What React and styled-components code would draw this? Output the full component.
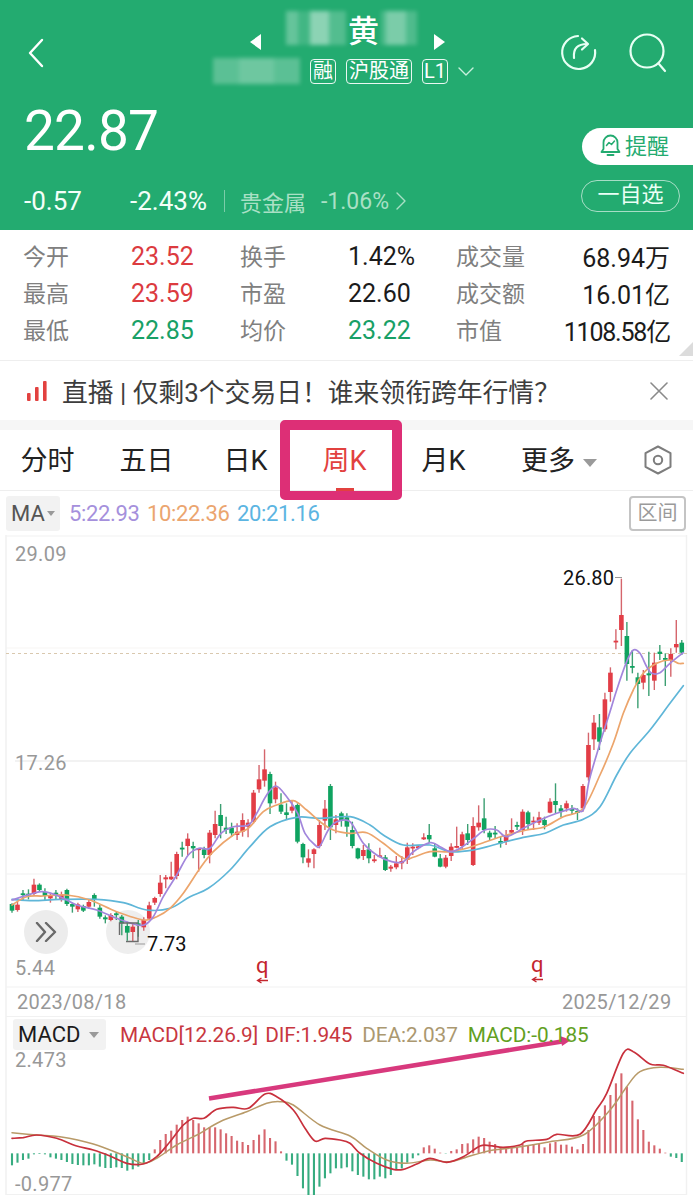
import React from "react";
import styled, { createGlobalStyle } from "styled-components";

const Global = createGlobalStyle`
  html, body { margin: 0; padding: 0; background: #fff; }
  * { box-sizing: border-box; }
`;
const FONT = `Roboto, "Noto Sans CJK SC", sans-serif`;
const GREEN = "#23ab70";
const RED = "#dc3b3f";
const UP = "#e23d46";
const DOWN = "#0fa360";

const Page = styled.div`
  width: 693px; height: 1200px; overflow: hidden; background: #fff;
  font-family: ${FONT}; position: relative;
`;
const Header = styled.header`
  height: 230px; background: ${GREEN}; color: #fff; display: flex; flex-direction: column;
`;
const TopGrid = styled.div`
  height: 100px; display: grid; grid-template-columns: 213px 262px 1fr; 
`;
const BackCell = styled.div`
  padding: 38px 0 0 27px;
`;
const CenterCell = styled.div`
  display: flex; flex-direction: column; padding-top: 11px;
`;
const NameRow = styled.div`
  display: flex; align-items: flex-start; height: 46px; padding-left: 36px; 
`;
const Tri = styled.svg`
  width: 13px; height: 18px; margin-top: 22px; flex: none;
`;
const Mosaic = styled.span`
  display: block; flex: none; width: ${p => p.$w}px; height: ${p => p.$h}px; filter: blur(2px);
  background: linear-gradient(90deg, ${p => p.$stops});
`;
const NameChar = styled.span`
  font-size: 31px; line-height: 42px; width: 35px; text-align: center; font-weight: 500; flex: none;
`;
const TagRow = styled.div`
  display: flex; align-items: center; gap: 10px; height: 32px; margin-top: -2px;
`;
const Tag = styled.span`
  height: 25px; width: ${p => p.$w}px; border: 1px solid rgba(255,255,255,.9); border-radius: 4px;
  font-size: 20px; line-height: 22px; text-align: center; flex: none; white-space: nowrap;
`;
const Actions = styled.div`
  display: flex; justify-content: flex-end; gap: 31px; padding: 33px 24px 0 0; align-items: flex-start;
`;
const PriceBlock = styled.div`
  display: flex; justify-content: space-between; flex: 1;
`;
const PriceLeft = styled.div`
  padding-left: 24px; display: flex; flex-direction: column;
`;
const Price = styled.div`
  font-size: 55px; line-height: 62px; height: 86px; font-weight: 400; letter-spacing: -.8px;
`;
const ChangeRow = styled.div`
  display: flex; align-items: center; height: 30px; font-size: 26px;
`;
const Change = styled.span`
  width: ${p => p.$w}px; flex: none; color: #f3fff9;
`;
const Divider = styled.i`
  width: 1px; height: 22px; background: rgba(255,255,255,.4); margin: 0 15px 0 16px;
`;
const Sector = styled.span`
  color: #a9e0c5; font-size: 22px; margin-right: 15px;
`;
const SectorPct = styled.span`
  color: #a9e0c5; font-size: 23px; margin-right: 7px;
`;
const BtnCol = styled.div`
  display: flex; flex-direction: column; align-items: flex-end; padding-top: 28px;
`;
const RemindBtn = styled.div`
  width: 111px; height: 37px; background: #fff; border-radius: 19px 0 0 19px; color: ${GREEN};
  display: flex; align-items: center; gap: 4px; padding: 0 0 5px 18px; font-size: 22px;
`;
const WatchBtn = styled.div`
  width: 99px; height: 32px; margin: 15px 13px 0 0; border: 1px solid rgba(255,255,255,.6); border-radius: 16px;
  font-size: 22px; line-height: 28px; text-align: center; color: #eafff5;
`;

const Stats = styled.section`
  height: 131px; padding: 8px 23px 0 23px; display: grid; position: relative;
  grid-template-columns: 108px 109px 108px 108px auto 1fr; grid-auto-rows: 37px; align-items: center;
  border-bottom: 1px solid #eeeeee;
`;
const Label = styled.span`
  color: #808080; font-size: 23px; white-space: nowrap; margin-top: -4px;
`;
const Value = styled.span`
  font-size: 25px; color: ${p => p.$c || "#1b1b1b"}; white-space: nowrap;
  text-align: ${p => (p.$right ? "right" : "left")};
  letter-spacing: ${p => (p.$tight ? "-1.2px" : "0")};
  margin-top: -1px;
`;
const Corner = styled.i`
  position: absolute; right: 0; bottom: 4px; width: 0; height: 0;
  border-left: 14px solid transparent; border-bottom: 14px solid #dcdcdc;
`;
const Notice = styled.div`
  height: 59px; display: flex; align-items: center; padding-left: 27px; color: #3d3d3d;
`;
const NoticeText = styled.span`
  font-size: 25.8px; margin-left: 15px; flex: 1; white-space: nowrap;
`;
const Band = styled.div`
  height: 10px; background: #f6f6f6;
`;
const Tabs = styled.nav`
  height: 61px; position: relative; display: grid; grid-template-columns: repeat(6, 99px) 1fr;
  align-items: center; border-bottom: 1px solid #eeeeee; color: #222;
`;
const Tab = styled.div`
  text-align: center; font-size: 27px; line-height: 40px; white-space: nowrap; margin-top: 2px;
  padding-right: 4px; color: ${p => (p.$on ? "#e2413f" : "#222")};
`;
const MoreTab = styled(Tab)`
  text-align: left; padding: 0 0 0 26px;
`;
const IconCell = styled.div`
  padding-left: 50px; line-height: 0;
`;
const CloseCell = styled.div`
  padding-right: 25px; line-height: 0;
`;
const Caret = styled.i`
  display: inline-block; width: 0; height: 0; margin-left: ${p => p.$ml || 8}px; vertical-align: ${p => p.$va || 3}px;
  border-left: ${p => p.$s || 7}px solid transparent; border-right: ${p => p.$s || 7}px solid transparent;
  border-top: ${p => (p.$s || 7) + 1}px solid #9a9a9a;
`;
const HighlightBox = styled.div`
  position: absolute; left: 280px; top: -10px; width: 122px; height: 80px;
  border: solid #dd2f76; border-width: 10px 10px 9px; border-radius: 5px;
`;
const Underline = styled.i`
  position: absolute; left: 336px; top: 58px; width: 18px; height: 3px; background: #e2413f;
`;
const MaBar = styled.div`
  height: 44px; display: flex; align-items: center; padding: 0 7px 0 6px; font-size: 22px;
`;
const SelectBox = styled.div`
  width: ${p => p.$w}px; height: ${p => p.$h}px; background: #f2f2f2; border-radius: 3px; color: ${p => p.$c};
  display: flex; align-items: center; padding-left: ${p => p.$pl}px; font-size: 22px; flex: none;
`;
const MaValue = styled.span`
  color: ${p => p.$c}; margin-right: 7.5px; letter-spacing: -.35px; white-space: nowrap;
`;
const MaList = styled.div`
  flex: 1; display: flex; padding-left: 9px;
`;
const RangeBtn = styled.div`
  width: 57px; height: 35px; border: 2px solid #c4c4c4; border-radius: 4px; color: #9a9a9a;
  font-size: 20px; line-height: 31px; text-align: center;
`;
const ChartWrap = styled.div`
  position: relative; height: 665px;
`;
const ChartSvg = styled.svg`
  display: block; width: 693px; height: 665px; font-family: ${FONT};
`;
const Expand = styled.div`
  position: absolute; left: 24px; top: 375px; width: 44px; height: 44px; border-radius: 50%; background: #ececec;
  display: flex; align-items: center; justify-content: center;
`;
const MacdBar = styled.div`
  position: absolute; left: 13px; top: 484px; height: 31px; display: flex; align-items: center; white-space: nowrap;
`;
const MacdGap = styled.i`
  width: 14px; flex: none;
`;
const MacdText = styled.span`
  color: ${p => p.$c}; font-size: 20.8px; margin-right: ${p => p.$mr}px; letter-spacing: -.1px;
`;

// ---------- data (coordinates read from the reference at 3x) ----------
const C = [[0,372,392,370,398],[1,374,390,364,395],[0,340,345,330,360],[0,341,345,328,358],[1,314,342,296,345],[0,314,330,310,335],[0,336,348,325,360],[1,348,355,340,368],[0,338,348,330,360],[1,345,358,335,365],[0,330,372,326,378],[0,372,380,368,398],[1,373,388,368,396],[0,378,392,374,396],[1,366,380,360,386],[0,345,360,340,380],[0,383,410,375,416],[0,412,418,406,430],[1,405,420,400,424],[0,400,404,395,420],[0,410,430,405,466],[0,438,458,425,482],[1,440,456,430,485],[0,430,436,420,470],[1,420,442,412,452],[1,376,416,365,420],[1,354,368,350,375],[1,308,342,285,350],[1,292,298,285,325],[1,290,298,245,300],[1,222,288,215,298],[0,203,207,185,230],[1,176,198,160,225],[0,198,205,185,235],[1,205,210,205,275],[0,208,225,200,235],[1,158,225,150,250],[1,132,165,92,175],[0,105,138,72,175],[0,143,150,110,162],[0,143,160,128,170],[1,155,165,130,180],[1,120,155,100,170],[1,128,140,118,172],[1,38,125,30,130],[1,-2,28,-45,38],[1,-32,2,-92,20],[0,-18,70,-25,102],[1,22,58,5,70],[0,74,95,40,102],[0,97,105,70,120],[1,80,92,60,100],[0,75,185,70,190],[0,192,232,188,250],[1,235,248,208,262],[1,208,222,205,265],[1,135,198,120,205],[1,86,122,60,150],[0,18,142,12,180],[1,118,135,105,160],[0,100,120,95,140],[0,112,140,100,170],
[0,150,198,125,205],[0,205,235,203,238],[1,210,228,195,240],[0,208,235,190,250],[1,238,243,225,248],[1,226,230,203,232],[0,232,270,225,273],[1,260,266,255,275],[1,250,262,228,268],[1,243,250,228,268],[1,202,240,188,252],[1,200,203,190,225],[1,199,202,198,208],[1,172,178,160,180],[0,165,178,132,190],[0,205,230,190,232],[0,235,260,222,262],[1,233,260,225,265],[1,200,228,190,243],[1,198,201,140,205],[1,163,198,155,210],[0,160,180,132,195],[1,138,255,112,258],[1,128,142,76,152],[0,115,150,55,160],[0,158,172,152,180],[0,158,162,138,175],[0,183,190,170,203],[1,165,185,150,195],[1,150,158,115,165],[0,135,140,125,150],[1,95,150,88,165],[0,97,132,92,150],[1,122,126,110,150],[1,112,128,95,135],[0,120,135,110,148],[1,65,98,55,100],[0,63,75,10,100],[0,85,95,75,112],[1,70,85,62,95],[0,87,92,75,105],[0,93,96,85,120],[1,18,85,12,95],
[1,-105,-8,-142,2],[1,-172,-122,-195,-90],[0,-158,-115,-198,-90],[1,-242,-152,-262,-145],[1,-322,-264,-338,-235],[1,-418,-415,-452,-392],[1,-495,-450,-604,-402],[0,-432,-348,-474,-298],[0,-342,-339,-390,-320],[0,-308,-288,-322,-215],[1,-315,-292,-330,-272],[0,-320,-314,-385,-252],[1,-352,-298,-382,-270],[0,-385,-378,-405,-360],[0,-366,-362,-380,-282],[1,-378,-360,-395,-310],[1,-408,-398,-480,-382],[0,-412,-382,-420,-375]];

const shift = a => a.map(([x, y]) => [x + 1050, y]);
const MA5 = [[36,360],[100,340],[130,335],[180,350],[230,375],[290,390],[350,415],[400,432],[432,435],[460,410],[490,350],[530,285],[565,225],[597,205],[630,205],[663,160],[700,140],[745,135],[770,100],[800,45],[828,18],[860,50],[893,100],[915,160],[945,195],[960,198],[985,150],[1010,125],
  ...shift([[0,125],[40,190],[80,225],[125,245],[160,245],[190,215],[240,188],[270,200],[300,215],[330,205],[372,175],[405,150],[440,150],[470,170],[520,145],[570,120],[620,100],[670,85],[700,90],[718,0],[750,-110],[780,-205],[800,-270],[830,-355],[850,-390],[870,-380],[890,-340],[905,-320],[930,-322],[960,-350],[1000,-382]])];
const MA10 = [[36,375],[80,350],[130,348],[200,345],[270,360],[350,395],[432,420],[470,410],[510,385],[550,340],[600,265],[640,215],[700,165],[745,145],[790,95],[830,75],[880,62],[920,90],[960,125],[1000,150],
  ...shift([[0,160],[50,158],[100,190],[160,235],[190,232],[240,215],[300,215],[350,205],[400,188],[470,165],[530,150],[585,140],[640,110],[700,85],[750,-15],[790,-110],[820,-200],[850,-270],[880,-320],[920,-350],[960,-360],[985,-350],[1000,-350]])];
const MA20 = [[36,358],[100,362],[180,358],[290,358],[370,368],[440,390],[510,385],[570,350],[625,325],[690,270],[750,200],[810,140],[890,112],[960,115],
  ...shift([[0,110],[60,135],[100,165],[160,195],[240,195],[300,215],[370,210],[430,195],[520,172],[585,160],[640,135],[700,118],[750,80],[800,-15],[840,-80],[900,-150],[960,-230],[1000,-283]])];
const DIF = [[36,385],[70,383],[110,375],[170,385],[230,408],[280,420],[330,438],[380,460],[430,462],[470,440],[510,395],[550,345],[580,325],[612,325],[650,298],[700,292],[745,295],[795,252],[830,260],[880,300],[915,355],[945,393],[975,385],[1020,390],
  ...shift([[0,400],[30,430],[80,460],[130,478],[160,478],[200,462],[240,445],[290,457],[340,440],[390,408],[420,407],[460,412],[510,405],[530,393],[590,388],[620,373],[690,373],[740,298],[770,250],[820,130],[850,125],[900,162],[940,166],[1000,190]])];
const DEA = [[36,368],[110,375],[180,380],[280,402],[380,440],[430,460],[470,445],[530,405],[600,370],[660,335],[740,305],[800,280],[840,275],[880,285],[960,345],
  ...shift([[0,378],[50,415],[110,450],[170,460],[240,450],[300,455],[370,435],[430,420],[500,412],[600,395],[700,375],[780,300],[830,230],[870,185],[930,172],[1000,178]])];
const HIST = [466,458,450,446,433,432,433,442,446,450,456,462,465,466,466,463,470,474,474,472,474,482,478,470,460,450,418,390,372,362,344,330,320,330,340,352,352,352,358,370,378,392,396,405,390,374,358,384,394,424,452,464,498,535,555,555,530,505,490,475,475,472,484,495,500,508,508,500,505,495,480,475,458,445,436,412,406,416,428,431,423,418,402,400,388,380,384,395,402,412,414,414,412,402,406,402,402,412,400,396,404,404,410,418,402,360,318,318,286,255,220,190,230,272,328,360,395,406,416,428,440,444,456];

const cx = i => 12 + 5.49 * i;
const ky = z => 780 + z / 3;
const my = z => 1010 + z / 3;
function smooth(points, mapY) {
  const p = points.map(([x, y]) => [x / 3, mapY(y)]);
  let d = `M${p[0][0].toFixed(1)} ${p[0][1].toFixed(1)}`;
  for (let i = 0; i < p.length - 1; i++) {
    const a = p[Math.max(0, i - 1)], b = p[i], c = p[i + 1], e = p[Math.min(p.length - 1, i + 2)];
    const c1 = [b[0] + (c[0] - a[0]) / 6, b[1] + (c[1] - a[1]) / 6];
    const c2 = [c[0] - (e[0] - b[0]) / 6, c[1] - (e[1] - b[1]) / 6];
    d += `C${c1[0].toFixed(1)} ${c1[1].toFixed(1)} ${c2[0].toFixed(1)} ${c2[1].toFixed(1)} ${c[0].toFixed(1)} ${c[1].toFixed(1)}`;
  }
  return d;
}

const Candles = () => (
  <g>
    {C.map(([up, t, b, wt, wb], i) => {
      const x = cx(i);
      const col = up ? UP : DOWN;
      const top = ky(t), h = Math.max(1.8, (b - t) / 3);
      return (
        <g key={i}>
          <line x1={x} x2={x} y1={ky(wt)} y2={ky(wb)} stroke={up ? "#d5656c" : "#3c9f72"} strokeWidth="1.4" />
          <rect x={x - 2.3} y={top} width="4.6" height={h} fill={col} />
        </g>
      );
    })}
  </g>
);

const Hist = () => (
  <g>
    {HIST.map((z, i) => {
      const up = z < 430;
      return (
        <line key={i} x1={cx(i)} x2={cx(i)} y1={my(430)} y2={my(z)}
          stroke={up ? "#d6666e" : "#37ac80"} strokeWidth="2.1" />
      );
    })}
  </g>
);

const Grey = ({ x, y, children }) => (
  <text x={x} y={y} fontSize="20" fill="#989898" letterSpacing=".3">{children}</text>
);

const Chart = () => (
  <ChartSvg viewBox="0 535 693 665">
    <g stroke="#f1f1f1" strokeWidth="1.2" fill="none">
      <path d="M6 536H687M6 874H687M6 987H687M6 1016.5H687M6 1194.5H687" />
      <path d="M6 648H687" stroke="#f8f6f3" />
      <path d="M6 535V1195M686.5 535V1195" strokeWidth="1.5" />
      <path d="M15 761H687" stroke="#e6e6e6" />
    </g>
    <path d="M6 653.5H687" stroke="#d9c8ae" strokeWidth="1" strokeDasharray="3 3" fill="none" />

    <Grey x={15} y={561}>29.09</Grey>
    <Grey x={15} y={770}>17.26</Grey>
    <Grey x={15} y={975}>5.44</Grey>
    <Grey x={17} y={1009}>2023/08/18</Grey>
    <Grey x={562} y={1009}>2025/12/29</Grey>
    <Grey x={15} y={1067}>2.473</Grey>
    <Grey x={15} y={1191}>-0.977</Grey>

    <circle cx="128" cy="932" r="22" fill="#eeeeee" />
    <Candles />
    <g fill="none" strokeLinecap="round" strokeLinejoin="round">
      <path d={smooth(MA20, ky)} stroke="#5fb6d8" strokeWidth="1.7" />
      <path d={smooth(MA10, ky)} stroke="#eca56c" strokeWidth="1.7" />
      <path d={smooth(MA5, ky)} stroke="#a286dc" strokeWidth="1.7" />
    </g>
    <path d="M119.5 935V923H138M126 941.5H138V926" fill="none" stroke="#6b6b6b" strokeWidth="1.4" />

    <text x="563" y="585" fontSize="20" fill="#111" letterSpacing=".2">26.80</text>
    <path d="M615 577.5H622" stroke="#999" strokeWidth="1" />
    <text x="147" y="951" fontSize="20" fill="#111" letterSpacing=".2">7.73</text>
    <path d="M135 944H145" stroke="#999" strokeWidth="1" />

    <text x="256" y="973" fontSize="22" fill="#c4262e">q</text>
    <path d="M268 980.5H258M261.5 978L257.5 980.5L261.5 983" stroke="#c4262e" strokeWidth="1.3" fill="none" />
    <text x="531" y="972" fontSize="22" fill="#c4262e">q</text>
    <path d="M543 979.5H533M536.5 977L532.5 979.5L536.5 982" stroke="#c4262e" strokeWidth="1.3" fill="none" />

    <Hist />
    <g fill="none" strokeLinecap="round" strokeLinejoin="round">
      <path d={smooth(DEA, my)} stroke="#b89a68" strokeWidth="1.5" />
      <path d={smooth(DIF, my)} stroke="#c8303c" strokeWidth="1.7" />
    </g>
    <path d="M209 1098.5L562 1041.5" stroke="#d8397d" strokeWidth="4.6" />
    <path d="M560 1036L571 1040L562 1046Z" fill="#d8397d" />
  </ChartSvg>
);

const BackIcon = () => (
  <svg width="18" height="30" viewBox="0 0 18 30" fill="none" stroke="#fff" strokeWidth="2.4" strokeLinecap="round" strokeLinejoin="round">
    <path d="M15 2L3 15L15 28" />
  </svg>
);
const RefreshIcon = () => (
  <svg width="38" height="38" viewBox="0 0 38 38" fill="none" stroke="#e8fff4" strokeWidth="2.2" strokeLinecap="round" strokeLinejoin="round">
    <path d="M18 3A16.5 16.5 0 1 0 35 17" />
    <path d="M14 25C13 15 18 11 27 11" />
    <path d="M22 5.5L28 11L22 16.5" />
  </svg>
);
const SearchIcon = () => (
  <svg width="40" height="40" viewBox="0 0 40 40" fill="none" stroke="#e8fff4" strokeWidth="2.2" strokeLinecap="round">
    <circle cx="18" cy="18" r="16.5" />
    <path d="M30 31L36 38" />
  </svg>
);
const BellIcon = () => (
  <svg width="21" height="25" viewBox="0 0 21 25" fill="none" stroke={GREEN} strokeWidth="1.8" strokeLinecap="round" strokeLinejoin="round">
    <path d="M3.5 17V10.5a7 7 0 0 1 14 0V17L19.5 20H1.5Z" />
    <path d="M7.5 23H13.5" />
    <path d="M6.5 13.5L9 10.5L11.5 12.5L14.5 9" strokeWidth="1.5" />
  </svg>
);
const SmallChevron = ({ w = 10, h = 18, c = "#a9e0c5", d = "M1 1L9 9L1 17" }) => (
  <svg width={w} height={h} viewBox={`0 0 ${w} ${h}`} fill="none" stroke={c} strokeWidth="1.4" strokeLinecap="round" strokeLinejoin="round">
    <path d={d} />
  </svg>
);
const BarsIcon = () => (
  <svg width="20" height="20" viewBox="0 0 20 20" fill="#e2413f">
    <rect x="0" y="12" width="3.6" height="8" rx="1" />
    <rect x="8" y="6" width="3.6" height="14" rx="1" />
    <rect x="16" y="0" width="3.6" height="20" rx="1" />
  </svg>
);
const CloseIcon = () => (
  <svg width="18" height="18" viewBox="0 0 18 18" stroke="#8a8a8a" strokeWidth="1.6" strokeLinecap="round">
    <path d="M1 1L17 17M17 1L1 17" />
  </svg>
);
const HexIcon = () => (
  <svg width="28" height="30" viewBox="0 0 28 30" fill="none" stroke="#7d7d7d" strokeWidth="2" strokeLinejoin="round">
    <path d="M14 1.5L26.5 8.2V21.8L14 28.5L1.5 21.8V8.2Z" />
    <circle cx="14" cy="15" r="4.2" />
  </svg>
);
const Chevrons = () => (
  <svg width="22" height="20" viewBox="0 0 22 20" fill="none" stroke="#6a6a6a" strokeWidth="2.4" strokeLinecap="round" strokeLinejoin="round">
    <path d="M2 1L10 10L2 19M11 1L20 10L11 19" />
  </svg>
);

const STATS = [
  ["今开", "23.52", RED, "换手", "1.42%", null, "成交量", "68.94万"],
  ["最高", "23.59", RED, "市盈", "22.60", null, "成交额", "16.01亿"],
  ["最低", "22.85", "#18a066", "均价", "23.22", "#18a066", "市值", "1108.58亿"],
];
const NAME_L = "rgba(255,255,255,.3) 0 20%, rgba(255,255,255,.14) 20% 40%, rgba(255,255,255,.48) 40% 72%, rgba(255,255,255,.22) 72%";
const NAME_R = "rgba(255,255,255,.18) 0 15%, rgba(255,255,255,.4) 15% 70%, rgba(255,255,255,.2) 70%";
const SUB = "rgba(255,255,255,.26) 0 30%, rgba(255,255,255,.34) 30% 70%, rgba(255,255,255,.26) 70%";

export default function App() {
  return (
    <Page>
      <Global />
      <Header>
        <TopGrid>
          <BackCell><BackIcon /></BackCell>
          <CenterCell>
            <NameRow>
              <Tri viewBox="0 0 13 18"><path d="M12 1V17L1 9Z" fill="#fff" /></Tri>
              <Mosaic $w={24} $h={0} $stops="transparent, transparent" />
              <Mosaic $w={60} $h={34} $stops={NAME_L} />
              <NameChar>黄</NameChar>
              <Mosaic $w={36} $h={34} $stops={NAME_R} />
              <Mosaic $w={16} $h={0} $stops="transparent, transparent" />
              <Tri viewBox="0 0 13 18"><path d="M1 1V17L12 9Z" fill="#fff" /></Tri>
            </NameRow>
            <TagRow>
              <Mosaic $w={87} $h={26} $stops={SUB} />
              <Tag $w={26}>融</Tag>
              <Tag $w={66}>沪股通</Tag>
              <Tag $w={26}>L1</Tag>
              <SmallChevron w={16} h={9} c="#c9f0dd" d="M1 1L8 8L15 1" />
            </TagRow>
          </CenterCell>
          <Actions>
            <RefreshIcon />
            <SearchIcon />
          </Actions>
        </TopGrid>
        <PriceBlock>
          <PriceLeft>
            <Price>22.87</Price>
            <ChangeRow>
              <Change $w={106}>-0.57</Change>
              <Change $w={78}>-2.43%</Change>
              <Divider />
              <Sector>贵金属</Sector>
              <SectorPct>-1.06%</SectorPct>
              <SmallChevron />
            </ChangeRow>
          </PriceLeft>
          <BtnCol>
            <RemindBtn><BellIcon />提醒</RemindBtn>
            <WatchBtn>一自选</WatchBtn>
          </BtnCol>
        </PriceBlock>
      </Header>

      <Stats>
        {STATS.map(r => (
          <React.Fragment key={r[0]}>
            <Label>{r[0]}</Label>
            <Value $c={r[2]}>{r[1]}</Value>
            <Label>{r[3]}</Label>
            <Value $c={r[5]}>{r[4]}</Value>
            <Label>{r[6]}</Label>
            <Value $right $tight={r[7].length > 7}>{r[7]}</Value>
          </React.Fragment>
        ))}
        <Corner />
      </Stats>

      <Notice>
        <BarsIcon />
        <NoticeText>直播 | 仅剩3个交易日！谁来领衔跨年行情？</NoticeText>
        <CloseCell><CloseIcon /></CloseCell>
      </Notice>
      <Band />

      <Tabs>
        <Tab>分时</Tab>
        <Tab>五日</Tab>
        <Tab>日K</Tab>
        <Tab $on>周K</Tab>
        <Tab>月K</Tab>
        <MoreTab>更多<Caret /></MoreTab>
        <IconCell><HexIcon /></IconCell>
        <HighlightBox />
        <Underline />
      </Tabs>

      <MaBar>
        <SelectBox $w={54} $h={35} $pl={5} $c="#555">MA<Caret $s={4} $ml={2} $va={2} /></SelectBox>
        <MaList>
          <MaValue $c="#a590dc">5:22.93</MaValue>
          <MaValue $c="#eba56f">10:22.36</MaValue>
          <MaValue $c="#5cb5e2">20:21.16</MaValue>
        </MaList>
        <RangeBtn>区间</RangeBtn>
      </MaBar>

      <ChartWrap>
        <Chart />
        <Expand><Chevrons /></Expand>
        <MacdBar>
          <SelectBox $w={93} $h={31} $pl={5} $c="#1c1c1c">MACD<Caret $s={5} $ml={9} $va={1} /></SelectBox>
          <MacdGap />
          <MacdText $c="#c8373f" $mr={7}>MACD[12.26.9]</MacdText>
          <MacdText $c="#c8373f" $mr={10}>DIF:1.945</MacdText>
          <MacdText $c="#ab9870" $mr={10}>DEA:2.037</MacdText>
          <MacdText $c="#62a01f" $mr={0}>MACD:-0.185</MacdText>
        </MacdBar>
      </ChartWrap>
    </Page>
  );
}
